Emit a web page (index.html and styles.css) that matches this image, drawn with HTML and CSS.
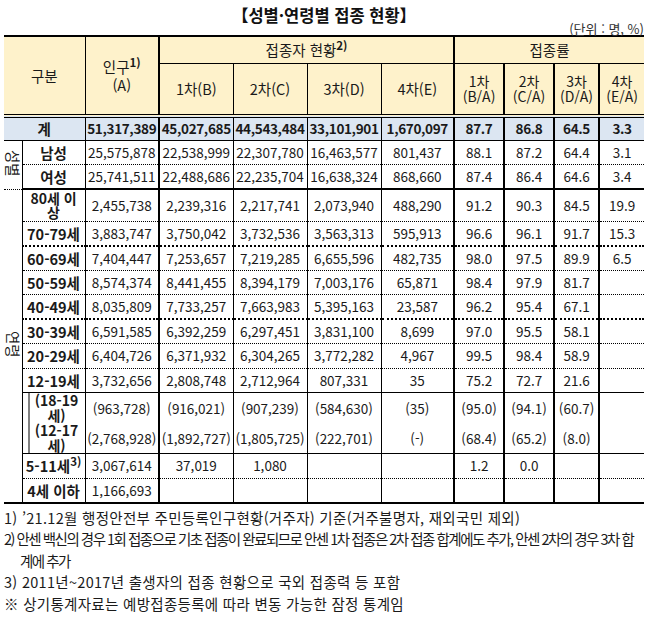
FILE: index.html
```html
<!DOCTYPE html>
<html lang="ko">
<head>
<meta charset="utf-8">
<title>성별·연령별 접종 현황</title>
<link rel="stylesheet" href="styles.css">
</head>
<body>
<div class="page">
  <h1 class="title">【성별·연령별 접종 현황】</h1>
  <div class="unit">(단위 : 명, %)</div>
  <table class="stats">
    <colgroup>
      <col class="c-sub"><col class="c-label"><col class="c-num"><col class="c-num"><col class="c-num"><col class="c-num"><col class="c-num4"><col class="c-rate"><col class="c-rate"><col class="c-rate2"><col class="c-rate2">
    </colgroup>
    <thead>
      <tr class="h1">
        <th colspan="2" rowspan="2" class="b-r1">구분</th>
        <th rowspan="2" class="b-r2">인구<sup>1)</sup><br>(A)</th>
        <th colspan="4" class="grp b-r2">접종자 현황<sup>2)</sup></th>
        <th colspan="4" class="grp">접종률</th>
      </tr>
      <tr class="h2">
        <th class="b-r1">1차(B)</th>
        <th class="b-r1">2차(C)</th>
        <th class="b-r1">3차(D)</th>
        <th class="b-r2">4차(E)</th>
        <th class="rate b-r2">1차<br>(B/A)</th>
        <th class="rate b-r2">2차<br>(C/A)</th>
        <th class="rate b-r2">3차<br>(D/A)</th>
        <th class="rate">4차<br>(E/A)</th>
      </tr>
    </thead>
    <tbody>
      <tr class="total">
        <td colspan="2" class="lbl b-r1">계</td>
        <td class="b-r2">51,317,389</td><td class="b-r1">45,027,685</td><td class="b-r1">44,543,484</td><td class="b-r1">33,101,901</td><td class="b-r2">1,670,097</td><td class="b-r2">87.7</td><td class="b-r2">86.8</td><td class="b-r2">64.5</td><td>3.3</td>
      </tr>
      <tr class="r dot">
        <td rowspan="2" class="side"><span class="vert">성별</span></td>
        <td class="lbl b-r1">남성</td>
        <td class="b-r2">25,575,878</td><td class="b-r1">22,538,999</td><td class="b-r1">22,307,780</td><td class="b-r1">16,463,577</td><td class="b-r2">801,437</td><td class="b-r2">88.1</td><td class="b-r2">87.2</td><td class="b-r2">64.4</td><td>3.1</td>
      </tr>
      <tr class="r thick">
        <td class="lbl b-r1">여성</td>
        <td class="b-r2">25,741,511</td><td class="b-r1">22,488,686</td><td class="b-r1">22,235,704</td><td class="b-r1">16,638,324</td><td class="b-r2">868,660</td><td class="b-r2">87.4</td><td class="b-r2">86.4</td><td class="b-r2">64.6</td><td>3.4</td>
      </tr>
      <tr class="r dot tall">
        <td rowspan="11" class="side"><span class="vert">연령</span></td>
        <td class="lbl wrap2 b-r1">80세 이<br>상</td>
        <td class="b-r2">2,455,738</td><td class="b-r1">2,239,316</td><td class="b-r1">2,217,741</td><td class="b-r1">2,073,940</td><td class="b-r2">488,290</td><td class="b-r2">91.2</td><td class="b-r2">90.3</td><td class="b-r2">84.5</td><td>19.9</td>
      </tr>
      <tr class="r dot2">
        <td class="lbl b-r1">70-79세</td>
        <td class="b-r2">3,883,747</td><td class="b-r1">3,750,042</td><td class="b-r1">3,732,536</td><td class="b-r1">3,563,313</td><td class="b-r2">595,913</td><td class="b-r2">96.6</td><td class="b-r2">96.1</td><td class="b-r2">91.7</td><td>15.3</td>
      </tr>
      <tr class="r dot">
        <td class="lbl b-r1">60-69세</td>
        <td class="b-r2">7,404,447</td><td class="b-r1">7,253,657</td><td class="b-r1">7,219,285</td><td class="b-r1">6,655,596</td><td class="b-r2">482,735</td><td class="b-r2">98.0</td><td class="b-r2">97.5</td><td class="b-r2">89.9</td><td>6.5</td>
      </tr>
      <tr class="r dot">
        <td class="lbl b-r1">50-59세</td>
        <td class="b-r2">8,574,374</td><td class="b-r1">8,441,455</td><td class="b-r1">8,394,179</td><td class="b-r1">7,003,176</td><td class="b-r2">65,871</td><td class="b-r2">98.4</td><td class="b-r2">97.9</td><td class="b-r2">81.7</td><td></td>
      </tr>
      <tr class="r dot2">
        <td class="lbl b-r1">40-49세</td>
        <td class="b-r2">8,035,809</td><td class="b-r1">7,733,257</td><td class="b-r1">7,663,983</td><td class="b-r1">5,395,163</td><td class="b-r2">23,587</td><td class="b-r2">96.2</td><td class="b-r2">95.4</td><td class="b-r2">67.1</td><td></td>
      </tr>
      <tr class="r dot">
        <td class="lbl b-r1">30-39세</td>
        <td class="b-r2">6,591,585</td><td class="b-r1">6,392,259</td><td class="b-r1">6,297,451</td><td class="b-r1">3,831,100</td><td class="b-r2">8,699</td><td class="b-r2">97.0</td><td class="b-r2">95.5</td><td class="b-r2">58.1</td><td></td>
      </tr>
      <tr class="r dot">
        <td class="lbl b-r1">20-29세</td>
        <td class="b-r2">6,404,726</td><td class="b-r1">6,371,932</td><td class="b-r1">6,304,265</td><td class="b-r1">3,772,282</td><td class="b-r2">4,967</td><td class="b-r2">99.5</td><td class="b-r2">98.4</td><td class="b-r2">58.9</td><td></td>
      </tr>
      <tr class="r solid">
        <td class="lbl b-r1">12-19세</td>
        <td class="b-r2">3,732,656</td><td class="b-r1">2,808,748</td><td class="b-r1">2,712,964</td><td class="b-r1">807,331</td><td class="b-r2">35</td><td class="b-r2">75.2</td><td class="b-r2">72.7</td><td class="b-r2">21.6</td><td></td>
      </tr>
      <tr class="r solid sub">
        <td class="lbl sublbl b-r1">(18-19<br>세)<br>(12-17<br>세)</td>
        <td class="b-r2"><div class="pair"><span>(963,728)</span><span>(2,768,928)</span></div></td>
        <td class="b-r1"><div class="pair"><span>(916,021)</span><span>(1,892,727)</span></div></td>
        <td class="b-r1"><div class="pair"><span>(907,239)</span><span>(1,805,725)</span></div></td>
        <td class="b-r1"><div class="pair"><span>(584,630)</span><span>(222,701)</span></div></td>
        <td class="b-r2"><div class="pair"><span>(35)</span><span>(-)</span></div></td>
        <td class="b-r2"><div class="pair"><span>(95.0)</span><span>(68.4)</span></div></td>
        <td class="b-r2"><div class="pair"><span>(94.1)</span><span>(65.2)</span></div></td>
        <td class="b-r2"><div class="pair"><span>(60.7)</span><span>(8.0)</span></div></td>
        <td></td>
      </tr>
      <tr class="r dot">
        <td class="lbl b-r1">5-11세<sup>3)</sup></td>
        <td class="b-r2">3,067,614</td><td class="b-r1">37,019</td><td class="b-r1">1,080</td><td class="b-r1"></td><td class="b-r2"></td><td class="b-r2">1.2</td><td class="b-r2">0.0</td><td class="b-r2"></td><td></td>
      </tr>
      <tr class="r last">
        <td class="lbl b-r1">4세 이하</td>
        <td class="b-r2">1,166,693</td><td class="b-r1"></td><td class="b-r1"></td><td class="b-r1"></td><td class="b-r2"></td><td class="b-r2"></td><td class="b-r2"></td><td class="b-r2"></td><td></td>
      </tr>
    </tbody>
  </table>
  <div class="notes">
    <p class="note">1) ’21.12월 행정안전부 주민등록인구현황(거주자) 기준(거주불명자, 재외국민 제외)</p>
    <p class="note hang tight"><span class="nowrap">2) 안센 백신의 경우 1회 접종으로 기초 접종이 완료되므로 안센 1차 접종은 2차 접종 합계에도 추가, 안센 2차의 경우 3차 합</span><br>계에 추가</p>
    <p class="note">3) 2011년~2017년 출생자의 접종 현황으로 국외 접종력 등 포함</p>
    <p class="note">※ 상기통계자료는 예방접종등록에 따라 변동 가능한 잠정 통계임</p>
  </div>
</div>
</body>
</html>
```

FILE: styles.css
```css
html, body {
  margin: 0;
  padding: 0;
  background: #fff;
}
body {
  font-family: "Noto Sans CJK KR", "Noto Sans", sans-serif;
  color: #1a1a1a;
}
.page {
  width: 640px;
  padding: 5px 0 0 4px;
}
.title {
  margin: 0;
  font-size: 16.5px;
  line-height: 20px;
  font-weight: bold;
  text-align: center;
  color: #111;
}
.unit {
  text-align: right;
  font-size: 13px;
  line-height: 13px;
  height: 13px;
  margin-top: -3px;
  color: #333;
}
.stats {
  width: 640px;
  table-layout: fixed;
  border-collapse: collapse;
  border-top: 2px solid #000;
  border-bottom: 2px solid #000;
  font-size: 13.5px;
}
.c-sub { width: 18px; }
.c-label { width: 63px; }
.c-num { width: 74px; }
.c-num4 { width: 73px; }
.c-rate { width: 50px; }
.c-rate2 { width: 45px; }

.stats th, .stats td {
  padding: 0;
  text-align: center;
  vertical-align: middle;
  white-space: nowrap;
}
.stats th {
  background: #fef2cb;
  font-weight: normal;
  font-size: 14.5px;
  line-height: 18px;
  color: #1a1a1a;
}
.stats thead tr.h1 { height: 27px; }
.stats thead tr.h2 { height: 53px; }
.stats thead tr.h2 th { border-bottom: 4px double #000; }
.stats thead th[rowspan] { border-bottom: 4px double #000; }
.stats th.grp { border-bottom: 1px solid #000; }
.stats th.rate { line-height: 15px; font-size: 14px; }
.stats sup {
  font-size: 11.5px;
  font-weight: bold;
  line-height: 0;
  vertical-align: 6px;
}

.b-r1 { border-right: 1px solid #000; }
.b-r2 { border-right: 2px solid #000; }

.stats td { line-height: 17px; }
.stats tr.total { height: 24px; }
.stats tr.total td {
  background: #dce6f2;
  font-weight: bold;
  font-size: 13.5px;
  letter-spacing: -0.35px;
  border-bottom: 1px solid #000;
}
.stats tr.total td.lbl { font-size: 14.5px; letter-spacing: 0; }
.stats tr.r { height: 24.5px; }
.stats tr.tall { height: 32px; }
.stats tr.sub { height: 61px; }
.stats tr.dot td { border-bottom: 1px dotted #000; }
.stats tr.dot2 td { border-bottom: 2px dotted #000; }
.stats tr.thick td { border-bottom: 2px solid #000; }
.stats tr.solid td { border-bottom: 1px solid #000; }
.stats tr.last td { border-bottom: 2px solid #000; }

.stats td.lbl {
  font-weight: bold;
  font-size: 14.5px;
  line-height: 15px;
}
.stats td.wrap2 {
  font-size: 14px;
  line-height: 14px;
}
.stats td.side {
  border-right: 1px solid #000;
  border-bottom: 2px solid #000;
}
.vert {
  display: inline-block;
  writing-mode: vertical-rl;
  text-orientation: sideways;
  font-size: 14.5px;
  line-height: 16px;
  color: #1a1a1a;
}
.stats td.sublbl {
  font-size: 14px;
  line-height: 15px;
  background-image: linear-gradient(to right, transparent 6px, #000 6px, #000 7px, transparent 7px);
  padding-left: 6px;
}
.pair {
  display: flex;
  flex-direction: column;
  align-items: center;
  gap: 13px;
}

.notes {
  margin-top: 3px;
}
.note {
  margin: 0;
  font-size: 14.5px;
  line-height: 21.5px;
  letter-spacing: 0.3px;
  color: #1a1a1a;
}
.note.hang {
  padding-left: 16px;
  text-indent: -16px;
}
.note.tight {
  letter-spacing: -1.5px;
}
.nowrap {
  white-space: nowrap;
}
```
